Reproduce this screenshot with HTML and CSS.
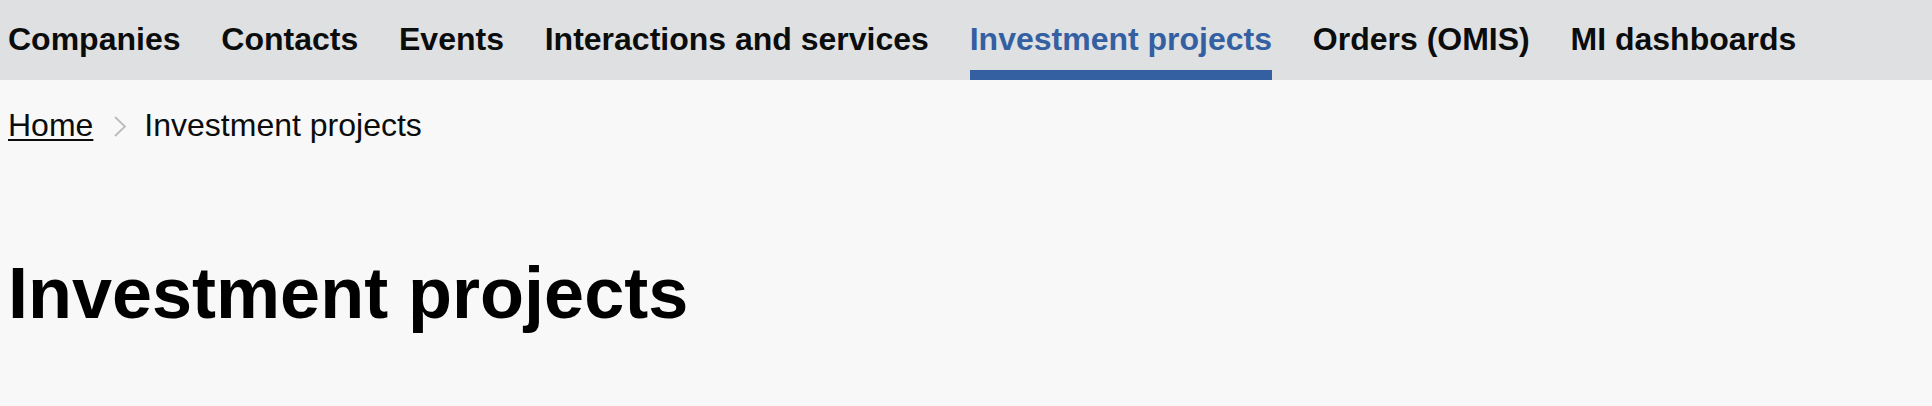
FILE: index.html
```html
<!DOCTYPE html>
<html lang="en">
<head>
<meta charset="utf-8">
<title>Investment projects</title>
<link rel="stylesheet" href="styles.css">
</head>
<body>
<nav class="nav">
  <a class="nav-item" href="#">Companies</a>
  <a class="nav-item" href="#">Contacts</a>
  <a class="nav-item" href="#">Events</a>
  <a class="nav-item" href="#">Interactions and services</a>
  <a class="nav-item nav-item--active" href="#">Investment projects</a>
  <a class="nav-item" href="#">Orders (OMIS)</a>
  <a class="nav-item" href="#">MI dashboards</a>
</nav>
<main class="main">
  <div class="breadcrumbs">
    <a class="crumb-link" href="#">Home</a>
    <svg class="chevron" width="12" height="21" viewBox="0 0 12 21" aria-hidden="true"><polyline points="1,1 11,10.5 1,20" fill="none" stroke="#b9bbbd" stroke-width="1.8"/></svg>
    <span class="crumb-current">Investment projects</span>
  </div>
  <h1 class="title">Investment projects</h1>
</main>
</body>
</html>
```
FILE: styles.css
```css
html, body {
  margin: 0;
  padding: 0;
}
body {
  background: #f8f8f8;
  font-family: "Liberation Sans", Arial, Helvetica, sans-serif;
  color: #0b0c0c;
  width: 1932px;
  height: 406px;
  overflow: hidden;
}
.nav {
  display: flex;
  gap: 40.8px;
  height: 80px;
  padding: 0 8px;
  background: #dee0e2;
}
.nav-item {
  box-sizing: border-box;
  height: 80px;
  padding-top: 23px;
  font-size: 32px;
  line-height: 32px;
  font-weight: 700;
  color: #0b0c0c;
  text-decoration: none;
  white-space: nowrap;
}
.nav-item--active {
  color: #345fa1;
  border-bottom: 10px solid #345fa1;
}
.main {
  padding: 29px 8px 0;
}
.breadcrumbs {
  display: flex;
  align-items: center;
  font-size: 32px;
  line-height: 32px;
}
.crumb-link {
  color: #0b0c0c;
  text-decoration: underline;
  text-decoration-thickness: 2px;
  text-underline-offset: 3px;
}
.chevron {
  display: block;
  margin: 3px 18px 0 21px;
}
.crumb-current {
  color: #0b0c0c;
}
.title {
  margin: 112px 0 0;
  font-size: 72px;
  line-height: 80px;
  font-weight: 700;
  color: #000;
}
```
